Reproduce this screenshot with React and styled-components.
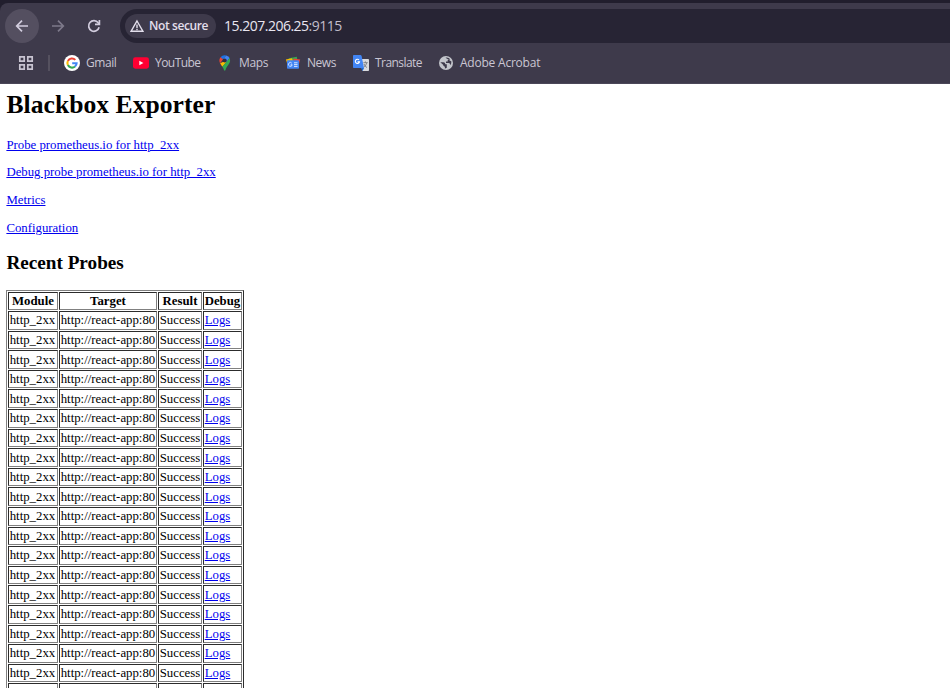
import React from "react";
import styled, { createGlobalStyle } from "styled-components";

const GlobalStyle = createGlobalStyle`
  html, body { margin: 0; padding: 0; background: #fff; }
  body { overflow: hidden; }
`;

const Window = styled.div`
  width: 950px;
  height: 688px;
  overflow: hidden;
  background: #fff;
`;

const Chrome = styled.header`
  box-sizing: border-box;
  height: 84px;
  padding-top: 3px;
  background: #211e2d;
  font-family: "Open Sans", "Noto Sans", sans-serif;
`;

const Bars = styled.div`
  box-sizing: border-box;
  height: 81px;
  padding-top: 6px;
  background: #3e3a4b;
  border-top-left-radius: 8px;
  border-bottom: 1px solid #4b4758;
`;

const Toolbar = styled.div`
  display: flex;
  align-items: center;
  height: 34px;
  padding-left: 5px;
`;

const NavButton = styled.button`
  display: grid;
  place-items: center;
  width: 34px;
  height: 34px;
  margin: 0 2px 0 0;
  padding: 0;
  border: 0;
  border-radius: 50%;
  background: ${(p) => (p.$active ? "#544f60" : "transparent")};
  color: ${(p) => (p.$dim ? "#7d798a" : "#d2cdde")};
`;

const AddressBar = styled.div`
  box-sizing: border-box;
  display: flex;
  flex: 1;
  align-items: center;
  height: 34px;
  margin-left: 7px;
  padding-left: 5px;
  border-radius: 17px 0 0 17px;
  background: #272434;
`;

const SecurityChip = styled.div`
  box-sizing: border-box;
  display: flex;
  align-items: center;
  gap: 5px;
  width: 91px;
  height: 24px;
  padding-left: 5px;
  border-radius: 12px;
  background: #3e3a4b;
  color: #e3dfec;
  font-size: 12px;
  font-weight: 600;
  letter-spacing: -0.4px;
  line-height: 16px;
  padding-bottom: 1px;
  white-space: nowrap;
`;

const Address = styled.div`
  margin-left: 8px;
  color: #e9e6f0;
  font-size: 14px;
  letter-spacing: -0.5px;
  line-height: 20px;
  padding-bottom: 1px;
  white-space: nowrap;
`;

const Port = styled.span`
  color: #c2becb;
`;

const Bookmarks = styled.nav`
  display: flex;
  align-items: center;
  height: 40px;
  padding-left: 18px;
`;

const Divider = styled.span`
  width: 2px;
  height: 16px;
  margin: 0 14px;
  background: #55515f;
`;

const Bookmark = styled.div`
  display: flex;
  align-items: center;
  gap: 6px;
  width: ${(p) => p.$width}px;
  color: #cac6d3;
  font-size: 12px;
  line-height: 16px;
  letter-spacing: ${(p) => p.$tracking}px;
  white-space: nowrap;
`;

const Icon = styled.svg`
  display: block;
  flex: none;
`;

const Page = styled.main`
  padding: 0 6.4px;
  color: #000;
  font-family: "Liberation Serif", "Times New Roman", serif;
  font-size: 12.8px;
  line-height: 15px;
`;

const Title = styled.h1`
  margin: 0;
  padding-top: 6px;
  font-size: 25.6px;
  line-height: 30px;
  letter-spacing: 0.04px;
`;

const LinkList = styled.div`
  display: flex;
  flex-direction: column;
  align-items: flex-start;
  gap: 12.7px;
  padding-top: 17.7px;
`;

const Link = styled.a`
  color: #0000ee;
  text-decoration: underline;
`;

const Subtitle = styled.h2`
  margin: 16.3px 0 16px;
  font-size: 19.2px;
  line-height: 22px;
`;

const ProbeTable = styled.table`
  width: 238px;
  table-layout: fixed;
  border: 1px outset gray;
  border-collapse: separate;
  border-spacing: 1px;
`;

const Column = styled.col`
  width: ${(p) => p.$width}px;
`;

const HeadCell = styled.th`
  box-sizing: border-box;
  height: 18px;
  padding: 0 0.8px 0 0;
  border: 1px inset gray;
  text-align: center;
  white-space: nowrap;
  line-height: 16px;
`;

const Cell = styled.td`
  box-sizing: border-box;
  height: 18.6px;
  padding: 0 0 0 0.3px;
  border: 1px inset gray;
  white-space: nowrap;
  line-height: 16px;
`;

const BackArrow = ({ flip }) => (
  <Icon width="14" height="14" viewBox="0 0 14 14" fill="none" stroke="currentColor" strokeWidth="1.7">
    <path d={flip ? "M1 7H12M7 1.7L12.3 7L7 12.3" : "M13 7H2M7 1.7L1.7 7L7 12.3"} />
  </Icon>
);

const Reload = () => (
  <Icon width="14" height="14" viewBox="0 0 14 14" fill="none" stroke="currentColor" strokeWidth="1.7">
    <path d="M12.1 8.2A5.3 5.3 0 1 1 11.2 3.8L12.4 5.2" />
    <path d="M12.4 1V5.4H8" />
  </Icon>
);

const Warning = () => (
  <Icon width="14" height="14" viewBox="0 0 14 14" fill="none" stroke="currentColor" strokeWidth="1.4">
    <path d="M7 2L13 12.3H1Z" />
    <path d="M7 5.5V9M7 9.8V11.2" />
  </Icon>
);

const Apps = () => (
  <Icon width="16" height="16" viewBox="0 0 16 16" fill="none" stroke="#c8c4d1" strokeWidth="1.7">
    <path d="M1.8 1.8H6.2V6.2H1.8ZM9.8 1.8H14.2V6.2H9.8ZM1.8 9.8H6.2V14.2H1.8ZM9.8 9.8H14.2V14.2H9.8Z" />
  </Icon>
);

const Google = () => (
  <Icon width="16" height="16" viewBox="0 0 16 16" fill="none" strokeWidth="2.1">
    <circle cx="8" cy="8" r="8" fill="#fff" />
    <path d="M11.3 4.9A4.6 4.6 0 0 0 3.9 5.9" stroke="#ea4335" />
    <path d="M3.9 5.9A4.6 4.6 0 0 0 3.9 10.1" stroke="#fbbc05" />
    <path d="M3.9 10.1A4.6 4.6 0 0 0 11 11.5" stroke="#34a853" />
    <path d="M11 11.5A4.6 4.6 0 0 0 12.6 8.2H8.2" stroke="#4285f4" />
  </Icon>
);

const YouTube = () => (
  <Icon width="16" height="16" viewBox="0 0 16 16">
    <rect y="2.3" width="16" height="11.4" rx="2.4" fill="#ff0033" />
    <path d="M6.3 5.7L10.4 8L6.3 10.3Z" fill="#fff" />
  </Icon>
);

const Maps = () => (
  <Icon width="16" height="16" viewBox="0 0 16 16">
    <path d="M7.7 0.2A5.5 5.5 0 0 0 3.5 2.2L5.9 4.2L9.3 0.5Z" fill="#1a73e8" />
    <path d="M3.5 2.2A5.6 5.6 0 0 0 3.1 8.2L6 4.3Z" fill="#ea4335" />
    <path d="M9.3 0.4A5.6 5.6 0 0 1 12.6 3.1L9.6 6.9L5.9 4.2Z" fill="#4285f4" />
    <path d="M5.9 7L9.5 6.9L5.3 11.7L3.1 8.2Z" fill="#fbbc04" />
    <path d="M12.6 3.1C14.7 8.2 9.4 10.4 8.5 15.1Q7.8 16.5 7 15.1Q6.5 13.2 5.3 11.7Z" fill="#34a853" />
    <circle cx="7.7" cy="5.5" r="2" fill="#322e3d" />
  </Icon>
);

const News = () => (
  <Icon width="16" height="16" viewBox="0 0 16 16">
    <path d="M3.7 3.2L11.8 1.8L12.5 5.5H3.7Z" fill="#34a853" />
    <path d="M8.5 3.6L15.2 4.4L14 9H8Z" fill="#ea4335" />
    <path d="M0.9 4.6L7 3.2L8.5 8H2Z" fill="#fbbc04" />
    <rect x="2" y="5.3" width="12" height="8.5" rx="0.8" fill="#4285f4" />
    <path d="M6.8 8.2A1.9 1.9 0 1 0 7.2 9.8H5.6M9 7.8H12.5M9 9.6H12.5M9 11.4H12.5" fill="none" stroke="#d7e5ff" strokeWidth="1" />
  </Icon>
);

const Translate = () => (
  <Icon width="16" height="16" viewBox="0 0 16 16">
    <path d="M6 4H15.2Q16 4 16 4.8V15.2Q16 16 15.2 16H9.5Z" fill="#d9dadd" />
    <path d="M8 13H11L9.6 16Z" fill="#1967d2" />
    <path d="M0.8 0H7.4Q8.3 0 8.6 0.9L11 13H0.8Q0 13 0 12.2V0.8Q0 0 0.8 0Z" fill="#4285f4" />
    <path d="M6 5A2.1 2.1 0 1 0 6.5 6.9H4.5" fill="none" stroke="#fff" strokeWidth="1.1" />
    <path d="M10.4 7.7H14.7M12.4 6.4V7.7M13.8 7.7Q13 10.7 11 12.3M11 9Q11.8 11.3 14 12.6" fill="none" stroke="#75797f" strokeWidth="0.9" />
  </Icon>
);

const Globe = () => (
  <Icon width="16" height="16" viewBox="0 0 16 16">
    <circle cx="8" cy="8" r="7" fill="#c3c5cb" />
    <path d="M2.3 7.3H5.4Q7.4 7.4 7.3 9.3H8.8V12.8Q7.6 13.5 6.9 13.4V11.7Q5.2 11.4 5.1 9.8ZM7.5 2.7Q10.5 2.1 12.2 4.3Q11.2 5.2 9.7 5V6.5H8V8H10.7Q12.2 8.1 12.3 10.3Q13.5 8.5 13.4 6.5" fill="#3e3a4b" />
  </Icon>
);

const bookmarks = [
  { label: "Gmail", icon: Google, width: 69, tracking: -0.45 },
  { label: "YouTube", icon: YouTube, width: 84, tracking: -0.55 },
  { label: "Maps", icon: Maps, width: 68, tracking: -0.35 },
  { label: "News", icon: News, width: 68, tracking: -0.45 },
  { label: "Translate", icon: Translate, width: 85, tracking: -0.56 },
  { label: "Adobe Acrobat", icon: Globe, width: 110, tracking: -0.22 },
];

const links = [
  "Probe prometheus.io for http_2xx",
  "Debug probe prometheus.io for http_2xx",
  "Metrics",
  "Configuration",
];

const probes = Array.from({ length: 20 }, (_, id) => ({
  id,
  module: "http_2xx",
  target: "http://react-app:80",
  result: "Success",
}));

export default function App() {
  return (
    <Window>
      <GlobalStyle />
      <Chrome>
        <Bars>
          <Toolbar>
            <NavButton $active aria-label="Back"><BackArrow /></NavButton>
            <NavButton $dim aria-label="Forward"><BackArrow flip /></NavButton>
            <NavButton aria-label="Reload"><Reload /></NavButton>
            <AddressBar>
              <SecurityChip><Warning />Not secure</SecurityChip>
              <Address>15.207.206.25<Port>:9115</Port></Address>
            </AddressBar>
          </Toolbar>
          <Bookmarks>
            <Apps />
            <Divider />
            {bookmarks.map(({ label, icon: Glyph, width, tracking }) => (
              <Bookmark key={label} $width={width} $tracking={tracking}>
                <Glyph />{label}
              </Bookmark>
            ))}
          </Bookmarks>
        </Bars>
      </Chrome>
      <Page>
        <Title>Blackbox Exporter</Title>
        <LinkList>
          {links.map((label) => (
            <Link key={label} href="#">{label}</Link>
          ))}
        </LinkList>
        <Subtitle>Recent Probes</Subtitle>
        <ProbeTable>
          <colgroup>
            <Column $width={50} />
            <Column $width={98} />
            <Column $width={44} />
            <Column $width={39} />
          </colgroup>
          <thead>
            <tr>
              <HeadCell>Module</HeadCell>
              <HeadCell>Target</HeadCell>
              <HeadCell>Result</HeadCell>
              <HeadCell>Debug</HeadCell>
            </tr>
          </thead>
          <tbody>
            {probes.map((p) => (
              <tr key={p.id}>
                <Cell>{p.module}</Cell>
                <Cell>{p.target}</Cell>
                <Cell>{p.result}</Cell>
                <Cell><Link href="#">Logs</Link></Cell>
              </tr>
            ))}
          </tbody>
        </ProbeTable>
      </Page>
    </Window>
  );
}
